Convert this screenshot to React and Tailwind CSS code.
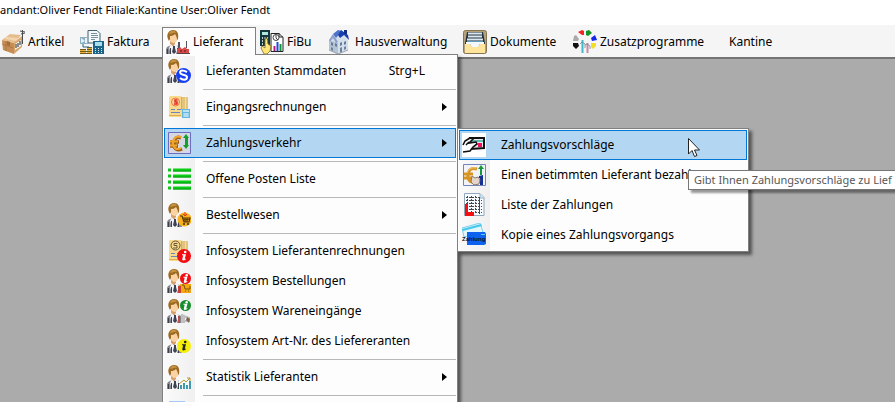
import { useState } from "react";

const Icon = ({ children }) => (
  <svg viewBox="0 0 24 24" className="size-6 shrink-0" aria-hidden="true">
    {children}
  </svg>
);

/* Shared figure used by most supplier icons */
const Person = () => (
  <>
    <path d="M0 24v-5l1-2 4-2h5l4 2 1 7z" fill="#85868f" />
    <path d="M5 14l2 2 3-2 2 3-2 7H5l-2-6z" fill="#f4f4f6" />
    <path d="M7 16h2v2l1 4-2 2-2-2 1-4z" fill="#3d4252" />
    <path d="M1 19h1v5H1zM4 18h1v6H4zM11 18h1v6h-1z" fill="#3c404c" />
    <path d="M4 11h5v3l-2 2-3-2z" fill="#d99f68" />
    <ellipse cx="7.500" cy="8" rx="4" ry="5" fill="#fbd3a3" />
    <path d="M2 9C0 4 3 0 7 0c4 0 6 3 5 9l-1 1c0-3-1-4-2-6C7 6 5 6 4 6v3L3 11z" fill="#9c6a22" />
    <path d="M3 4c1-4 6-4 7-1-3-1-5 1-7 1z" fill="#c8923f" />
  </>
);

const InfoBadge = ({ cx, cy, r, fill, color = "#fff" }) => (
  <g>
    <circle cx={cx} cy={cy} r={r} fill={fill} />
    <g transform={`translate(${cx} ${cy})`} fill={color}>
      <circle cx="1.2" cy={-r * 0.58} r="1.3" />
      <path d="M-2-1.800H2L.7 3l1.300-.5-.2 1Q-2.200 5.500-1.700 3L-.8-.8H-2z" />
    </g>
  </g>
);

const Cart = () => (
  <>
    <path d="M13 13h2l2 6h5l1-4h-7" fill="none" stroke="#503408" strokeWidth="1.2" />
    <path d="M17 16.500h5M17 18h4M18 15v4M20 15v4" stroke="#503408" strokeWidth=".8" />
    <circle cx="17" cy="21" r="1.100" fill="#503408" />
    <circle cx="21" cy="21" r="1.100" fill="#503408" />
  </>
);

const Bills = () => (
  <>
    <path d="M15 2h6v17h-6z" fill="#e3c47c" />
    <path d="M18 2h1v12h-1z" fill="#f5dda0" />
    <path d="M2 2l1-1h11l1 1v13l3 1v4l-2 2H3l-1-1z" fill="#f9d98c" />
    <path d="M2 20h12v1H2zM14 2h1v13h-1z" fill="#d9ae55" />
    <path d="M4 14.500h4M10 14.500h4M4 17.500h9" stroke="#6a86c0" strokeWidth="1" />
  </>
);

const icons = {
  artikel: (
    <Icon>
      <path d="M1 10L9 4l11 1-6 8z" fill="#e5bd8d" />
      <path d="M1 10l12 3v11L2 20z" fill="#c58c53" />
      <path d="M13 13l8-7v11l-8 7z" fill="#d9a46c" />
      <path d="M5 7l12 1-2 3L4 9z" fill="#f2d5ad" />
      <path d="M6 11v4l3 1v-4z" fill="#a66a35" />
      <path d="M14 14l6-4v6l-6 4z" fill="#f6f6ef" />
      <path d="M15 14v4M17 13v4M19 11v4" stroke="#222" />
      <path d="M21.500 0v14M19 1l5 1M20 4l4-1" stroke="#4b4b4b" />
      <path d="M1 14l11 4M5 11v10" stroke="#aa7442" strokeWidth=".8" />
    </Icon>
  ),
  faktura: (
    <Icon>
      <path d="M8 .5h9l3 3V13H8z" fill="#f4f8fa" stroke="#42606e" />
      <path d="M11 3.500h6M11 5.500h7M11 7.500h7M11 9.500h4" stroke="#7b929c" />
      <path d="M0 7h8v7H0z" fill="#8eb0c0" />
      <path d="M1 8l4 3-4 2zM5 8h2v5H5z" fill="#e5f3fa" />
      <path d="M13 11h11v13H13z" fill="#1d6388" />
      <path d="M15 12h7v4h-7z" fill="#a7dced" />
      <path d="M15 18.500h1M18 18.500h1M21 18.500h1M15 20.500h1M18 20.500h1M21 20.500h1M15 22.500h1M18 22.500h1M21 22.500h1" stroke="#dbeaf0" />
      <path d="M0 19h6v5H0zM7 17h5v7H7z" fill="#e8b433" />
      <path d="M0 19.500h6M0 21.500h12M7 17.500h5M7 19.500h5M0 23.500h12" stroke="#765a1c" />
      <path d="M3 14v3h6" stroke="#25657a" fill="none" />
    </Icon>
  ),
  lieferant: (
    <Icon>
      <Person />
      <path d="M12 12h2v7h-2zM20 11h1v7h-1z" fill="#51535f" />
      <path d="M11 19l3-2 2 2 3-2 2 2h2v5H11z" fill="#d84a48" />
      <path d="M14 20h2v2h-2zM18 20h2v2h-2z" fill="#8f2f31" />
      <path d="M11 23.500h13" stroke="#574249" />
    </Icon>
  ),
  fibu: (
    <Icon>
      <path d="M11 3.500h8l4 4v14H11z" fill="#fff" stroke="#222" />
      <path d="M19 3v4h4" fill="none" stroke="#222" />
      <circle cx="16" cy="7.500" r="3" fill="#fff" stroke="#444" />
      <path d="M16 5v3l2 2" stroke="#444" fill="none" />
      <path d="M0 0h10v16H0z" fill="#12393e" />
      <path d="M2 2h6v3H2z" fill="#b1e6dc" />
      <path d="M2 8h1M4.500 8h1M7 8h1M2 11h1M7 11h1M2 14h1" stroke="#fff" strokeWidth="1.5" />
      <path d="M14.500 16v5" stroke="#b81b77" strokeWidth="2" />
      <path d="M17.500 12v9" stroke="#1b4bdd" strokeWidth="2" />
      <path d="M20.500 14v7" stroke="#12953a" strokeWidth="2" />
      <path d="M5 9l2-1 1 6 3 2-1 5-3 3H4l-3-6 1-2 3 2z" fill="#ffe67b" stroke="#86671f" strokeWidth=".8" />
    </Icon>
  ),
  haus: (
    <Icon>
      <path d="M1 10l5-6 7-2 7 8v10l-10 4-9-4z" fill="#d5dfe9" />
      <path d="M1 10l9 3v11l-9-4z" fill="#b6c3d3" />
      <path d="M5 4l5-4 4 1-6 7z" fill="#4c74c9" />
      <path d="M13 0l7 5 1 5-5-5-4 3-2-3z" fill="#173fae" />
      <path d="M1 10l4-6 5 8-2 1-3-5-3 4z" fill="#8aa1cc" />
      <path d="M16 0h3v4h-3z" fill="#142f82" />
      <path d="M3 12l2 1v3l-2-1zM7 13l2 1v3l-2-1zM12 13l2-1v3l-2 1zM16 12l2-1v3l-2 1z" fill="#627c9f" />
      <path d="M3 17l2 1v3l-2-1zM12 18l2-1v5l-2 1zM16 17l2-1v3l-2 1z" fill="#6d849f" />
      <path d="M1 20l9 4 10-4" stroke="#9ba4ae" fill="none" />
    </Icon>
  ),
  dokumente: (
    <Icon>
      <rect x=".5" y=".5" width="23" height="23" rx="2" fill="#b3a27a" stroke="#857552" />
      <path d="M4 2h16l2 11v2H2v-2z" fill="#26343f" />
      <path d="M5 3.500h14M5 6.500h14M4 9.500h16" stroke="#dce8ef" strokeWidth="2" />
      <path d="M4 11.500h16" stroke="#5d9dbd" />
      <path d="M2 14h5l2 3h6l2-3h5v9H2z" fill="#ffe59b" />
      <path d="M3 12h18v2h-4l-2 3H9l-2-3H3z" fill="#f4f9fd" />
    </Icon>
  ),
  zusatz: (
    <Icon>
      <path d="M5 2l4-2 2 1v4H9z" fill="#f12727" />
      <path d="M13 1l3-1 3 3-4 3-2-1z" fill="#129426" />
      <path d="M18 8l4-3 2 5-5 1z" fill="#1725e8" />
      <path d="M18 13h5v3l-3 3-2-2z" fill="#f3de25" />
      <path d="M0 13h5l1 3-3 3-3-3z" fill="#111" />
      <path d="M1 6l2-1 3 4-1 2H0z" fill="#aaa" />
      <path d="M9.500 10v13" stroke="#42b8c8" strokeWidth="2" />
      <path d="M14.500 13v10" stroke="#c58ba0" strokeWidth="2" />
      <path d="M7 14l2-2 3 2v4M12 15l2-1 3 2v3" stroke="#758796" strokeWidth=".8" fill="none" />
    </Icon>
  ),
  stammdaten: (
    <Icon>
      <Person />
      <circle cx="16.500" cy="16.500" r="7.500" fill="#173ef2" />
      <path d="M20 13q-6-3-7 0c0 4 7 2 7 5 0 4-5 3-7 1" fill="none" stroke="#fff" strokeWidth="2" />
    </Icon>
  ),
  eingang: (
    <Icon>
      <Bills />
      <circle cx="8.500" cy="7" r="4" fill="#f7d6a2" stroke="#ef7846" />
      <path d="M10.500 5H8v2h2v2H7" fill="none" stroke="#e52f25" strokeWidth="1.5" />
      <path d="M15 14h8v9h-8z" fill="#65b6df" />
      <path d="M16 15h6v2h-6z" fill="#b8e4f4" />
      <path d="M16 19h6M16 21h6M18 18v4M20 18v4" stroke="#dcf4fb" strokeWidth=".8" />
    </Icon>
  ),
  euro: (
    <Icon>
      <path d="M1.500 1.500h22v21h-22z" fill="#d5d7e2" stroke="#6d6dc0" />
      <path d="M14 7c-5-2-7 1-7 6s3 7 8 5M3 11h9M3 15h8" fill="none" stroke="#9d5d12" strokeWidth="3.500" />
      <path d="M14 6c-5-2-8 2-8 6s3 8 8 5M3 10.500h8M3 14.500h7" fill="none" stroke="#f2a52b" strokeWidth="2" />
      <path d="M19 3l-3 4h2v7h-2l3 4 3-4h-1V7h1z" fill="#12a02c" />
    </Icon>
  ),
  liste: (
    <Icon>
      <path d="M6 3h18M6 9h18M6 15h18M6 21h18" stroke="#08cf16" strokeWidth="3" />
      <path d="M6 4h18M6 10h18M6 16h18M6 22h18" stroke="#0a9914" />
      <path d="M1 3h3M1 9h3M1 15h3M1 21h3" stroke="#10c21b" strokeWidth="3" />
    </Icon>
  ),
  bestellwesen: (
    <Icon>
      <Person />
      <circle cx="17.500" cy="16.500" r="7" fill="#f8b01c" />
      <Cart />
      <path d="M18 9v4l-2-2M18 13l2-2" stroke="#e5371f" fill="none" />
    </Icon>
  ),
  infoRechnung: (
    <Icon>
      <Bills />
      <circle cx="8.500" cy="6.500" r="4.500" fill="none" stroke="#665739" />
      <path d="M10.500 4.500H7v2h3v2.500H6" fill="none" stroke="#665739" />
      <InfoBadge cx={17} cy={17} r={7} fill="#f20d12" />
    </Icon>
  ),
  infoBestellung: (
    <Icon>
      <Person />
      <path d="M13 15h11v9H13z" fill="#f2a713" />
      <path d="M15 16h2l1 4h5v-3M18 22h1M21 22h1" stroke="#795014" fill="none" />
      <path d="M11 17h3v7h-3z" fill="#c43d36" />
      <InfoBadge cx={18.5} cy={9.5} r={5.5} fill="#f20d12" />
    </Icon>
  ),
  infoWaren: (
    <Icon>
      <Person />
      <path d="M11 17h2v7h-2z" fill="#c04b4b" />
      <path d="M15 15v8h2v-6l5 2v4M17 22h6" fill="none" stroke="#bfc1bf" strokeWidth="2" />
      <path d="M20 18l3 2-1 4-3-3z" fill="#806353" />
      <InfoBadge cx={18.5} cy={6.5} r={5.5} fill="#168d2e" />
    </Icon>
  ),
  infoArtikel: (
    <Icon>
      <Person />
      <InfoBadge cx={17} cy={17} r={7} fill="#f5ef08" color="#222" />
    </Icon>
  ),
  statistik: (
    <Icon>
      <Person />
      <path d="M12 13h12v11H12z" fill="#f5faf9" />
      <path d="M14 24v-4M17 24v-6M20 24v-4M23 24v-8" stroke="#429ab0" strokeWidth="2" />
      <path d="M12 19l5-4 2 2 4-4M20 13h3v3" fill="none" stroke="#bd942b" />
    </Icon>
  ),
  karte: (
    <Icon>
      <path d="M0 0h24v24H0z" fill="#fff" />
      <path d="M8 5h14v10l-13 1z" fill="#e9ecec" stroke="#111" strokeWidth="2" />
      <path d="M10 7h11v2H10z" fill="#62bbb2" />
      <path d="M16 10h4v4h-4z" fill="#f1125f" />
      <path d="M1 12l2-4 5-3 3 1-4 4 7-1 1 2-4 3-3 5-7 1" fill="#fff" />
      <path d="M1 12l2-4 5-3 3 1-4 4 7-1 1 2-4 3-3 4-7 1M4 12l3-3" fill="none" stroke="#111" strokeWidth="1.600" />
    </Icon>
  ),
  bezahlen: (
    <Icon>
      <path d="M1.500 1.500h22v21h-22z" fill="#f2f3f8" stroke="#7484ba" />
      <path d="M15 6C8 4 6 8 6 13s3 7 8 6M2 11h9M2 15h8" fill="none" stroke="#d79422" strokeWidth="3" />
      <path d="M14 5C9 4 6 7 5 10" fill="none" stroke="#f4cd76" />
      <path d="M19 2l-3 4h2v6h2V6h2z" fill="#16973b" />
      <path d="M17 13l4-1v10h-3v-7h-1z" fill="#142f95" />
      <path d="M10 13l3 2 3-1 2 3-1 4-5 1-3-3z" fill="#e3d5ca" stroke="#8b7769" />
    </Icon>
  ),
  zahlungen: (
    <Icon>
      <path d="M2.500.5H18l4 4v18H2.500z" fill="#f7faff" stroke="#93a7ba" />
      <path d="M18 1v4h4" fill="#d6eaf9" stroke="#91b5ce" />
      <path d="M4 4.500h14M4 7.500h16M4 10.500h16M4 13.500h16M4 16.500h16M4 19.500h16M5.500 3v18M9.500 3v18M13.500 3v18M17.500 5v16" stroke="#44484d" strokeDasharray="2 1" />
      <path d="M3 11h3v8h6v4H3z" fill="#f41010" />
    </Icon>
  ),
  kopie: (
    <Icon>
      <path d="M0 5l18-5 3 9L2 14z" fill="#e2f7fc" stroke="#79cfe8" />
      <path d="M0 6l19-5 1 2L1 8z" fill="#46c8ec" />
      <path d="M5 9h18l1 2v10l-2 1H5z" fill="#0d62f0" />
      <text x="0" y="18" fill="#06132b" fontFamily="Liberation Sans, sans-serif" fontSize="6" fontWeight="bold">
        Zahlung
      </text>
      <path d="M19 11.500h4" stroke="#58cef5" />
    </Icon>
  ),
  naechster: (
    <Icon>
      <path d="M2 0h16v24H2z" fill="#a8c9f3" />
    </Icon>
  ),
};

const menuBar = [
  { label: "Artikel", icon: "artikel", width: "w-[76px]", pad: "pl-0" },
  { label: "Faktura", icon: "faktura", width: "w-[86px]" },
  { label: "Lieferant", icon: "lieferant", width: "w-[94px]" },
  { label: "FiBu", icon: "fibu", width: "w-[68px]" },
  { label: "Hausverwaltung", icon: "haus", width: "w-[135px]" },
  { label: "Dokumente", icon: "dokumente", width: "w-[110px]" },
  { label: "Zusatzprogramme", icon: "zusatz", width: "w-[156px]" },
  { label: "Kantine", width: "w-16" },
];

const supplierMenu = [
  [{ label: "Lieferanten Stammdaten", icon: "stammdaten", shortcut: "Strg+L" }],
  [{ label: "Eingangsrechnungen", icon: "eingang", more: true }],
  [{ label: "Zahlungsverkehr", icon: "euro", more: true, active: true }],
  [{ label: "Offene Posten Liste", icon: "liste" }],
  [{ label: "Bestellwesen", icon: "bestellwesen", more: true }],
  [
    { label: "Infosystem Lieferantenrechnungen", icon: "infoRechnung" },
    { label: "Infosystem Bestellungen", icon: "infoBestellung" },
    { label: "Infosystem Wareneingänge", icon: "infoWaren" },
    { label: "Infosystem Art-Nr. des Liefereranten", icon: "infoArtikel" },
  ],
  [{ label: "Statistik Lieferanten", icon: "statistik", more: true }],
  [{ label: "", icon: "naechster" }],
];

const paymentMenu = [
  { label: "Zahlungsvorschläge", icon: "karte", active: true },
  { label: "Einen betimmten Lieferant bezahlen", icon: "bezahlen" },
  { label: "Liste der Zahlungen", icon: "zahlungen" },
  { label: "Kopie eines Zahlungsvorgangs", icon: "kopie" },
];

const MenuRow = ({ item, onClick }) => (
  <button
    role="menuitem"
    onClick={onClick}
    className={`flex h-[30px] w-full items-center border pl-0.5 text-left whitespace-nowrap ${
      item.active ? "border-[#0078d7] bg-[#b3d7f3]" : "border-transparent"
    }`}
  >
    {icons[item.icon]}
    <span className="ml-[15px] flex-1">{item.label}</span>
    {item.shortcut && <span className="mr-[30px]">{item.shortcut}</span>}
    {item.more && (
      <svg viewBox="0 0 5 8" className="mr-2 h-2 w-[5px]" aria-hidden="true">
        <path d="M0 0l5 4-5 4z" fill="#000" />
      </svg>
    )}
  </button>
);

const PaymentMenu = () => (
  <div
    role="menu"
    className="absolute top-0 left-full z-20 ml-px w-[292px] border border-[#808080] bg-[#fdfdfd] p-px shadow-[3px_3px_3px_rgba(0,0,0,0.5)]"
  >
    <div className="bg-linear-to-r from-[#fafafa] from-0% to-[#f0f0f0] to-[31px]">
      <div className="bg-linear-to-r from-transparent from-[31px] to-[#fdfdfd] to-[31px]">
        {paymentMenu.map((item) => (
          <MenuRow key={item.label} item={item} />
        ))}
      </div>
    </div>
    {/* Tooltip of the hovered entry */}
    <div
      role="tooltip"
      className="absolute top-[41px] left-[230px] w-64 border border-[#767676] bg-white px-[5px] text-[11px] leading-[18px] whitespace-nowrap text-[#575757] shadow-[3px_3px_2px_rgba(0,0,0,0.4)]"
    >
      Gibt Ihnen Zahlungsvorschläge zu Lief
    </div>
    <svg viewBox="0 0 12 19" className="absolute top-[9px] left-[230px] h-[19px] w-3" aria-hidden="true">
      <path d="M.5.5v15.500l3.500-3.500 2.500 6 2.500-1-2.500-5.500h5z" fill="#fff" stroke="#222" />
    </svg>
  </div>
);

const SupplierMenu = ({ submenuOpen, onToggle }) => (
  <div
    role="menu"
    className="absolute top-full -left-px z-10 w-[296px] border border-[#808080] bg-[#fdfdfd] p-px shadow-[3px_3px_3px_rgba(0,0,0,0.5)]"
  >
    {/* Hides the border between the open tab and its menu */}
    <div className="absolute -top-px left-0 h-px w-[92px] bg-[#fdfdfd]" />
    <div className="bg-linear-to-r from-[#fafafa] from-0% to-[#f0f0f0] to-[31px]">
      <div className="bg-linear-to-r from-transparent from-[31px] to-[#fdfdfd] to-[31px]">
        {supplierMenu.map((group, index) => (
          <div key={index}>
            {index > 0 && <div role="separator" className="mt-[3px] mb-[2px] ml-[39px] border-t border-[#b8b8b8]" />}
            {group.map((item) => (
              <div key={item.label} className="relative">
                <MenuRow item={item} onClick={item.active ? onToggle : undefined} />
                {item.active && submenuOpen && <PaymentMenu />}
              </div>
            ))}
          </div>
        ))}
      </div>
    </div>
  </div>
);

const App = () => {
  const [openMenu, setOpenMenu] = useState("Lieferant");
  const [submenuOpen, setSubmenuOpen] = useState(true);

  return (
    <div className="flex h-screen flex-col overflow-hidden bg-[#ababab] font-['Noto_Sans','Open_Sans',sans-serif] text-xs text-black">
      <header className="h-[25px] bg-white text-[11px] leading-5 whitespace-nowrap">
        andant:Oliver Fendt Filiale:Kantine User:Oliver Fendt
      </header>
      <nav className="flex h-[34px] items-start border-b-2 border-[#737373] bg-[#f5f5f5] pt-0.5">
        {menuBar.map((item) => {
          const open = openMenu === item.label;
          return (
            <div
              key={item.label}
              className={`relative h-[27px] shrink-0 ${item.width} ${
                open ? "border border-b-0 border-[#808080] bg-[#fdfdfd]" : "border border-transparent"
              }`}
            >
              <button
                onClick={() => setOpenMenu(open ? null : item.label)}
                className={`flex h-[27px] w-full items-center gap-[3px] whitespace-nowrap ${item.pad || "pl-[3px]"}`}
              >
                {item.icon && icons[item.icon]}
                <span>{item.label}</span>
              </button>
              {open && item.label === "Lieferant" && (
                <SupplierMenu submenuOpen={submenuOpen} onToggle={() => setSubmenuOpen(!submenuOpen)} />
              )}
            </div>
          );
        })}
      </nav>
      <main className="flex-1" />
    </div>
  );
};

export default App;
